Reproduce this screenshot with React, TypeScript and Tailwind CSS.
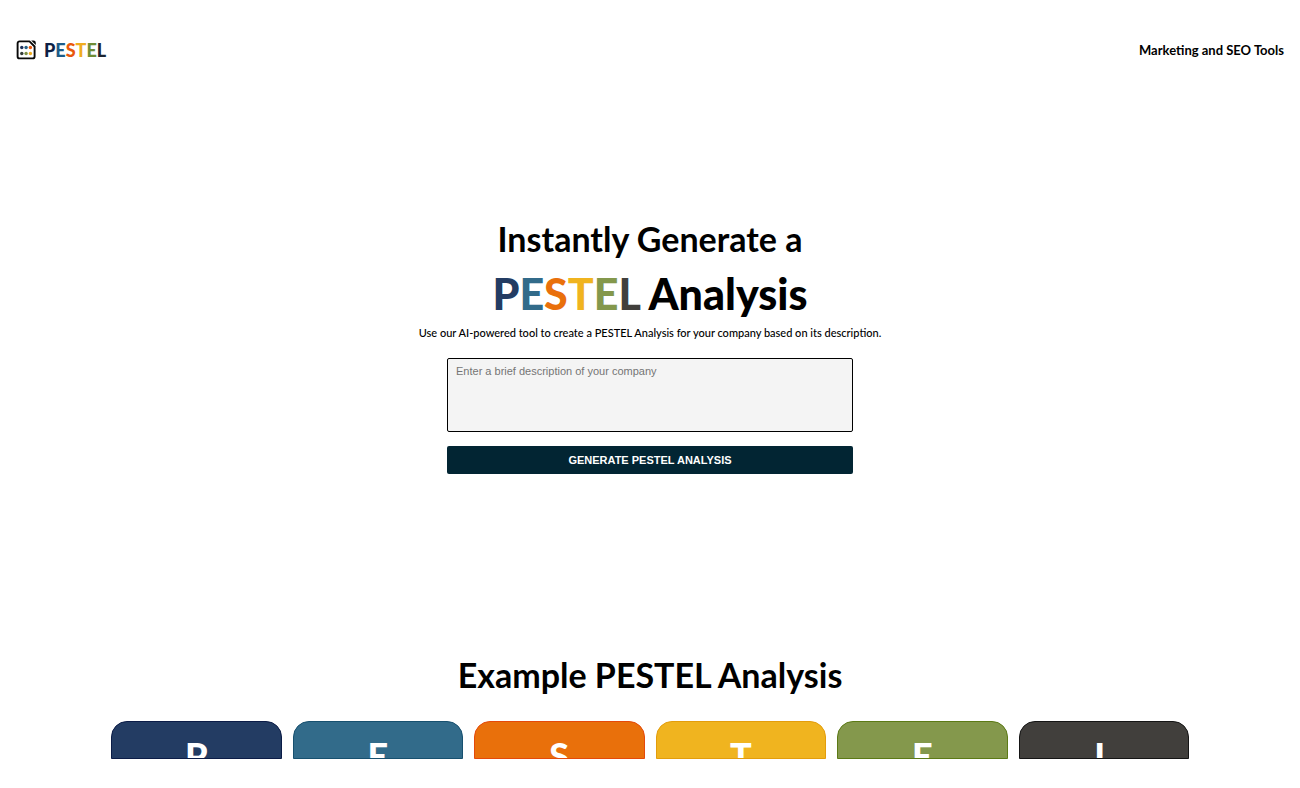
import { useState } from 'react';

const letters = [
  { char: 'P', text: 'text-[#233c63]', card: 'bg-[#233c63] border-[#0b1c47]' },
  { char: 'E', text: 'text-[#326b8a]', card: 'bg-[#326b8a] border-[#17506f]' },
  { char: 'S', text: 'text-[#e9700b]', card: 'bg-[#e9700b] border-[#e4490b]' },
  { char: 'T', text: 'text-[#f0b41f]', card: 'bg-[#f0b41f] border-[#e39d0c]' },
  { char: 'E', text: 'text-[#84984c]', card: 'bg-[#84984c] border-[#5c7a16]' },
  { char: 'L', text: 'text-[#413f3c]', card: 'bg-[#413f3c] border-[#151515]' },
];

const logoLetters = [
  { char: 'P', text: 'text-[#0c1f45]' },
  { char: 'E', text: 'text-[#1c5c88]' },
  { char: 'S', text: 'text-[#e9580b]' },
  { char: 'T', text: 'text-[#f0ac1f]' },
  { char: 'E', text: 'text-[#6f8d35]' },
  { char: 'L', text: 'text-[#1c2430]' },
];

function LogoIcon() {
  return (
    <svg width="20" height="20" viewBox="0 0 20 20" fill="none" aria-hidden="true">
      <path d="M13.5 1.4H3.6a2 2 0 0 0-2 2v13a2 2 0 0 0 2 2h13a2 2 0 0 0 2-2V6.5z" stroke="#080808" strokeWidth="1.9" strokeLinejoin="round" />
      <path d="M15.2.5h2.3a2.3 2.3 0 0 1 2.3 2.3v2.3z" fill="#080808" />
      <circle cx="5.8" cy="7.5" r="1.7" fill="#1c315c" />
      <circle cx="10.1" cy="7.5" r="1.7" fill="#286286" />
      <circle cx="14.4" cy="7.5" r="1.7" fill="#e9580b" />
      <circle cx="5.8" cy="13.5" r="1.7" fill="#343c38" />
      <circle cx="10.1" cy="13.5" r="1.7" fill="#7d9145" />
      <circle cx="14.4" cy="13.5" r="1.7" fill="#efac1f" />
    </svg>
  );
}

export default function App() {
  const [description, setDescription] = useState('');

  return (
    <div className="bg-white text-black font-[Lato,sans-serif]">
      <header className="flex items-center justify-between px-4 pt-9">
        <a href="#" className="flex items-center gap-2">
          <LogoIcon />
          <span className="text-lg leading-7 font-black">
            {logoLetters.map((l, i) => (
              <span key={i} className={l.text}>{l.char}</span>
            ))}
          </span>
        </a>
        <a href="#" className="text-[13px] leading-7 font-bold">Marketing and SEO Tools</a>
      </header>

      <main>
        <section className="flex flex-col items-center px-4 pt-[151px]">
          <h1 className="text-center font-bold">
            <span className="block text-[34px] leading-12">Instantly Generate a</span>
            <span className="block text-[43px] leading-[62px] font-black">
              {letters.map((l, i) => (
                <span key={i} className={l.text}>{l.char}</span>
              ))}{' '}
              Analysis
            </span>
          </h1>
          <p className="text-center text-[11px] leading-4 font-medium">
            Use our AI-powered tool to create a PESTEL Analysis for your company based on its description.
          </p>

          <form className="mt-[17px] flex w-full max-w-[406px] flex-col gap-3.5" onSubmit={e => e.preventDefault()}>
            <textarea
              aria-label="Company description"
              className="block h-[74px] w-full resize-none rounded-xs border border-black bg-[#f4f4f4] px-2 py-1 font-[Liberation_Sans,sans-serif] text-[11px] leading-4 placeholder:text-[#757575]"
              placeholder="Enter a brief description of your company"
              value={description}
              onChange={e => setDescription(e.target.value)}
            />
            <button
              type="submit"
              className="rounded-xs bg-[#022533] py-1.5 font-[Liberation_Sans,sans-serif] text-[11px] leading-4 font-bold text-white"
            >
              GENERATE PESTEL ANALYSIS
            </button>
          </form>
        </section>

        <section className="flex flex-col items-center px-4 pt-44">
          <h2 className="text-center text-[34px] leading-[50px] font-bold">Example PESTEL Analysis</h2>
          <div className="mt-[21px] grid w-full max-w-[1078px] grid-cols-6 gap-[11px]">
            {/* only the top of each card shows */}
            {letters.map((l, i) => (
              <div key={i} className={`h-[38px] overflow-hidden rounded-t-2xl border pt-2 text-center text-4xl leading-[50px] font-black text-white ${l.card}`}>
                {l.char}
              </div>
            ))}
          </div>
        </section>
      </main>
    </div>
  );
}
